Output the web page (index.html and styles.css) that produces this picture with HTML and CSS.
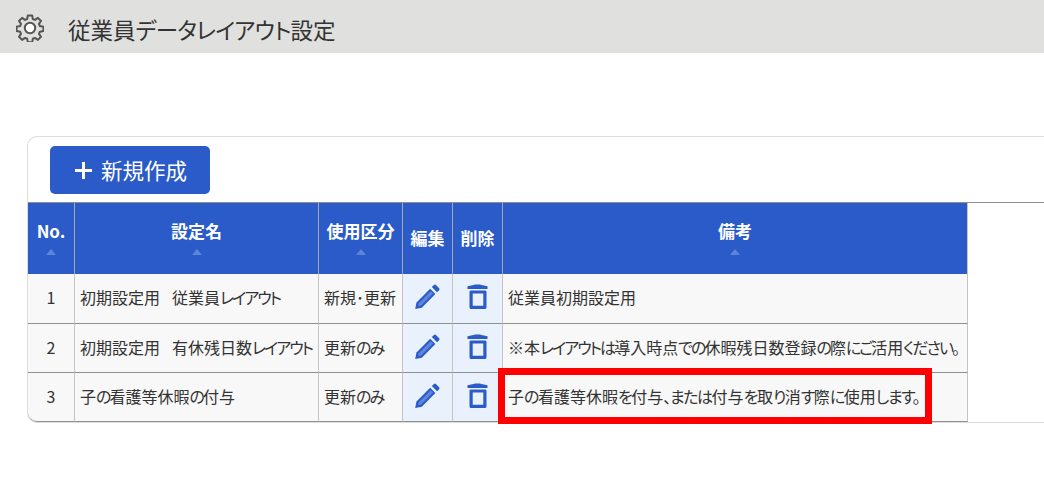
FILE: index.html
```html
<!DOCTYPE html>
<html lang="ja">
<head>
<meta charset="utf-8">
<title>従業員データレイアウト設定</title>
<link rel="stylesheet" href="styles.css">
</head>
<body>
<header class="topbar">
  <svg class="gear" viewBox="0 0 28 28" width="28" height="28" aria-hidden="true">
    <path d="M11.8 1.500h4.400l.6 3.500 2.200 .9 2.900-2 3.100 3.100-2 2.900 .9 2.200 3.500 .6v4.400l-3.500 .6-.9 2.200 2 2.900-3.100 3.100-2.900-2-2.200 .9-.6 3.500h-4.400l-.6-3.500-2.200-.9-2.900 2-3.100-3.100 2-2.900-.9-2.200-3.500-.6v-4.400l3.500-.6 .9-2.200-2-2.900 3.100-3.100 2.900 2 2.200-.9z" fill="none" stroke="#555" stroke-width="2" stroke-linejoin="round"/>
    <circle cx="14" cy="14" r="5.200" fill="#fff" stroke="#555" stroke-width="2"/>
  </svg>
  <h1 class="title">従業員<span class="tk">データレイアウト</span>設定</h1>
</header>
<main class="panel">
  <div class="toolbar">
    <button class="btn" type="button"><span class="plus"></span>新規作成</button>
  </div>
  <table class="grid">
    <colgroup>
      <col class="c1"><col class="c2"><col class="c3"><col class="c4"><col class="c5"><col class="c6">
    </colgroup>
    <thead>
      <tr>
        <th class="sortable"><span>No.</span><i class="tri"></i></th>
        <th class="sortable"><span>設定名</span><i class="tri"></i></th>
        <th class="sortable"><span>使用区分</span><i class="tri"></i></th>
        <th class="plain">編集</th>
        <th class="plain">削除</th>
        <th class="sortable"><span>備考</span><i class="tri"></i></th>
      </tr>
    </thead>
    <tbody>
      <tr>
        <td class="num">1</td>
        <td>初期設定用<i class="gap"></i>従業員<span class="k">レイアウト</span></td>
        <td>新規･更新</td>
        <td class="act"><svg class="ico" viewBox="0 0 26 26" width="26" height="26"><use href="#pen"/></svg></td>
        <td class="act"><svg class="ico" viewBox="0 0 26 26" width="26" height="26"><use href="#bin"/></svg></td>
        <td>従業員初期設定用</td>
      </tr>
      <tr>
        <td class="num">2</td>
        <td>初期設定用<i class="gap"></i>有休残日数<span class="k">レイアウト</span></td>
        <td>更新<span class="k">のみ</span></td>
        <td class="act"><svg class="ico" viewBox="0 0 26 26" width="26" height="26"><use href="#pen"/></svg></td>
        <td class="act"><svg class="ico" viewBox="0 0 26 26" width="26" height="26"><use href="#bin"/></svg></td>
        <td>※本<span class="k">レイアウトは</span>導入時点<span class="k">での</span>休暇残日数登録<span class="k">の</span>際<span class="k">にご</span>活用<span class="k">ください。</span></td>
      </tr>
      <tr>
        <td class="num">3</td>
        <td>子<span class="k">の</span>看護等休暇<span class="k">の</span>付与</td>
        <td>更新<span class="k">のみ</span></td>
        <td class="act"><svg class="ico" viewBox="0 0 26 26" width="26" height="26"><use href="#pen"/></svg></td>
        <td class="act"><svg class="ico" viewBox="0 0 26 26" width="26" height="26"><use href="#bin"/></svg></td>
        <td>子<span class="kw">の</span>看護等休暇<span class="kw">を</span>付与<span class="kw">、または</span>付与<span class="kw">を</span>取<span class="kw">り</span>消<span class="kw">す</span>際<span class="kw">に</span>使用<span class="kw">します。</span></td>
      </tr>
    </tbody>
  </table>
  <div class="highlight"></div>
</main>
<svg class="defs" width="0" height="0" aria-hidden="true">
  <symbol id="pen" viewBox="0 0 26 26">
    <path d="M.2 26l1.300-6.600L15.200 5.700l5.200 5.200L6.800 24.700z" fill="#2a5bc8"/>
    <path d="M3.800 20.200l-.7 3 3-.7L18 10.500l-2.300-2.300z" fill="#5f86dc"/>
    <path d="M16.800 4.100l1.900-1.900c.8-.8 1.700-.8 2.500 0l2.700 2.700c.8.800.8 1.700 0 2.500l-1.900 1.900z" fill="#2a5bc8"/>
  </symbol>
  <symbol id="bin" viewBox="0 0 26 26">
    <path d="M8.500 2c2-.6 6-.6 8 0l6 1.200v2.800h-20V3.200z" fill="#2a5bc8"/>
    <path fill-rule="evenodd" d="M6 7.500h14c1 0 1.500.5 1.500 1.500v15.200c0 1.200-.6 1.800-1.800 1.800H6.300c-1.200 0-1.800-.6-1.800-1.800V9c0-1 .5-1.500 1.500-1.500zM7.700 10.500v12.300h10.600V10.500z" fill="#2a5bc8"/>
  </symbol>
</svg>
</body>
</html>
```
FILE: styles.css
```css
* { box-sizing: border-box; }
html, body { margin: 0; padding: 0; }
body {
  background: #fff;
  color: #333;
  font-family: "Noto Sans CJK JP", "Noto Sans", sans-serif;
  font-feature-settings: "palt";
  overflow: hidden;
  height: 481px;
}
.topbar {
  height: 53px;
  background: #e0e0de;
  display: flex;
  align-items: center;
  padding-left: 16px;
  padding-top: 6px;
}
.gear { flex: none; margin-top: -3px; }
.title {
  margin: 0 0 0 24px;
  font-size: 22.5px;
  font-weight: 400;
  color: #333;
  line-height: 1;
}
.tk { letter-spacing: -0.75px; }
.panel {
  position: relative;
  margin: 83px 0 0 27px;
  width: 1017px;
  height: 287px;
  border: 1px solid #ddd;
  border-right: 0;
  border-radius: 10px 0 0 10px;
}
.toolbar {
  height: 66px;
  padding: 9px 0 0 22px;
  border-bottom: 1px solid #909090;
}
.btn {
  width: 160px;
  height: 48px;
  background: #2a5bc8;
  color: #fff;
  border: 0;
  border-radius: 5px;
  font: inherit;
  font-size: 21.5px;
  display: flex;
  align-items: center;
  justify-content: center;
  gap: 9px;
  padding: 0 0 2px 2px;
}
.plus {
  width: 17px;
  height: 17px;
  margin-top: 2px;
  background:
    linear-gradient(#fff, #fff) center / 100% 3px no-repeat,
    linear-gradient(#fff, #fff) center / 3px 100% no-repeat;
}
.grid {
  table-layout: fixed;
  border-collapse: separate;
  border-spacing: 0;
  width: 940px;
  font-size: 16px;
  color: #333;
}
.k { letter-spacing: -1.95px; }
.kw { letter-spacing: -1.45px; }
.gap { display: inline-block; width: 12px; }
.c1 { width: 46px; }
.c2 { width: 244px; }
.c3 { width: 84px; }
.c4, .c5 { width: 50px; }
.c6 { width: 466px; }
.grid th {
  height: 71px;
  background: #2a5bc8;
  color: #fff;
  font-weight: 700;
  font-size: 17px;
  padding: 0 0 2px;
  border-left: 1px solid #a8a8a0;
  vertical-align: middle;
  line-height: 1;
}
.grid th:first-child { border-left: 0; }
.sortable span { display: block; margin-top: 2px; }
.tri {
  display: block;
  width: 0;
  height: 0;
  margin: 10px auto 0;
  border-left: 5.500px solid transparent;
  border-right: 5.500px solid transparent;
  border-bottom: 6px solid #5f84d6;
}
.grid td {
  height: 49px;
  padding: 0 0 3px 5px;
  background: #f8f8f8;
  border-left: 1px solid #c4c4c4;
  border-bottom: 1px solid #909090;
  white-space: nowrap;
  vertical-align: middle;
}
.grid tbody tr:first-child td { height: 50px; }
.grid td:first-child { border-left: 0; }
.grid tbody tr:last-child td:first-child { border-bottom-left-radius: 9px; }
.grid td:last-child { border-right: 1px solid #c4c4c4; }
.grid th:last-child { border-right: 1px solid #c4c4c4; }
.grid td.num { padding: 0 0 3px; text-align: center; }
.grid td.act { padding: 0; background: #e9f1fd; text-align: center; }
.ico { display: block; margin: -5px auto 0; }
.highlight {
  position: absolute;
  left: 470px;
  top: 231px;
  width: 434px;
  height: 56px;
  border: 7px solid #f00;
}
.defs { position: absolute; }
```
